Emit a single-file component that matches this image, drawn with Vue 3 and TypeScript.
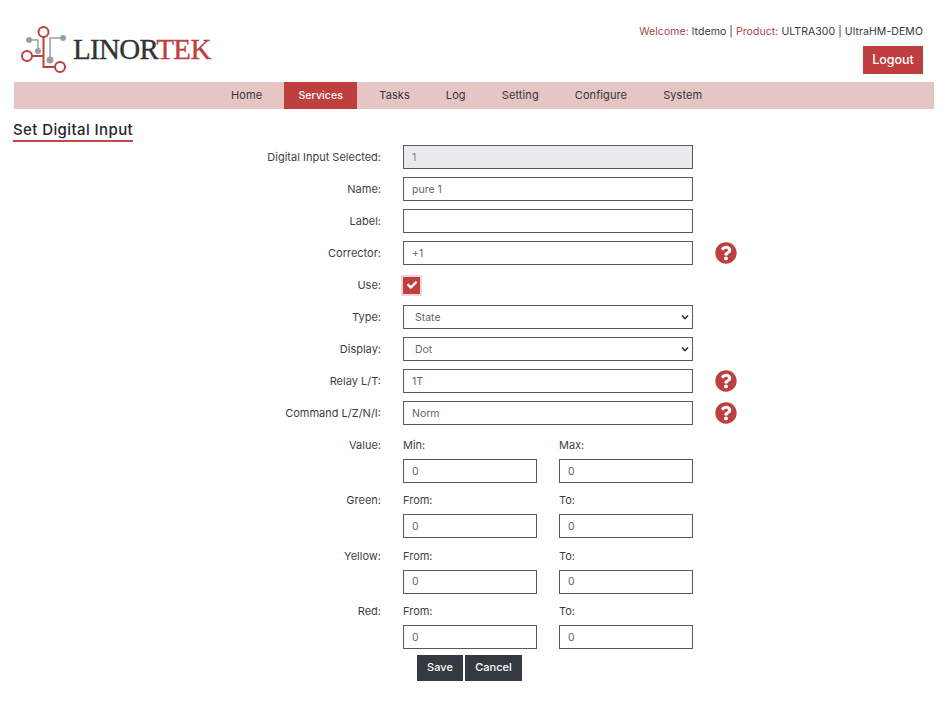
<script setup lang="ts">
interface Row { label: string; value: string; help?: boolean; disabled?: boolean }
const navItems: string[] = ['Home', 'Services', 'Tasks', 'Log', 'Setting', 'Configure', 'System']
const topRows: Row[] = [
  { label: 'Digital Input Selected:', value: '1', disabled: true },
  { label: 'Name:', value: 'pure 1' },
  { label: 'Label:', value: '' },
  { label: 'Corrector:', value: '+1', help: true },
]
const midRows: Row[] = [
  { label: 'Relay L/T:', value: '1T', help: true },
  { label: 'Command L/Z/N/I:', value: 'Norm', help: true },
]
const selects = [
  { label: 'Type:', value: 'State' },
  { label: 'Display:', value: 'Dot' },
]
const ranges = [
  { label: 'Value:', a: 'Min:', b: 'Max:' },
  { label: 'Green:', a: 'From:', b: 'To:' },
  { label: 'Yellow:', a: 'From:', b: 'To:' },
  { label: 'Red:', a: 'From:', b: 'To:' },
]
const helpPath = 'M504 256c0 136.997-111.043 248-248 248S8 392.997 8 256C8 119.083 119.043 8 256 8s248 111.083 248 248zM262.655 90c-54.497 0-89.255 22.957-116.549 63.758-3.536 5.286-2.353 12.415 2.715 16.258l34.699 26.31c5.205 3.947 12.621 3.008 16.665-2.122 17.864-22.658 30.113-35.797 57.303-35.797 20.429 0 45.698 13.148 45.698 32.958 0 14.976-12.363 22.667-32.534 33.976C247.128 238.528 216 254.941 216 296v4c0 6.627 5.373 12 12 12h56c6.627 0 12-5.373 12-12v-1.333c0-28.462 83.186-29.647 83.186-106.667 0-58.002-60.165-102-116.531-102zM256 338c-25.365 0-46 20.635-46 46 0 25.364 20.635 46 46 46s46-20.636 46-46c0-25.365-20.635-46-46-46z'
</script>

<template>
  <div class="page">
    <header class="header">
      <div class="brand">
        <svg class="logo" width="52" height="52" viewBox="20 22 52 52">
          <g fill="none" stroke="#9aa0a2" stroke-width="1.5">
            <path d="M29 40H38V51" />
            <path d="M50 60V38H63" />
          </g>
          <g fill="#9aa0a2">
            <circle cx="29" cy="40" r="3" />
            <circle cx="38" cy="51" r="3" />
            <circle cx="63" cy="38" r="3" />
            <circle cx="50" cy="60" r="3.5" />
          </g>
          <g fill="none" stroke="#bf3e3e" stroke-width="2">
            <path d="M43.5 37V67H55" />
            <path d="M32 56H43.5" />
            <circle cx="43.5" cy="32" r="5" />
            <circle cx="27" cy="56" r="5" />
            <circle cx="60" cy="67" r="5" />
          </g>
        </svg>
        <span class="wordmark">LINOR<span class="wordmark-accent">TEK</span></span>
      </div>
      <div class="account">
        <div class="welcome">
          <span class="accent">Welcome:</span> ltdemo | <span class="accent">Product:</span> ULTRA300 | UltraHM-DEMO
        </div>
        <button class="logout" type="button">Logout</button>
      </div>
    </header>

    <nav class="nav">
      <a v-for="item in navItems" :key="item" class="nav-item" :class="{ active: item === 'Services' }">{{ item }}</a>
    </nav>

    <h1 class="title">Set Digital Input</h1>

    <form class="form" @submit.prevent>
      <div v-for="row in topRows" :key="row.label" class="row">
        <label class="label">{{ row.label }}</label>
        <input class="field" type="text" :value="row.value" :disabled="row.disabled" />
        <svg v-if="row.help" class="help" viewBox="0 0 512 512" width="22" height="22"><path :d="helpPath" /></svg>
      </div>

      <div class="row">
        <label class="label">Use:</label>
        <span class="check">
          <svg viewBox="0 0 512 512" width="10" height="10"><path fill="#fff" stroke="#fff" stroke-width="30" d="M173.898 439.404l-166.4-166.4c-9.997-9.997-9.997-26.206 0-36.204l36.203-36.204c9.997-9.998 26.207-9.998 36.204 0L192 312.69 432.095 72.596c9.997-9.997 26.207-9.997 36.204 0l36.203 36.204c9.997 9.997 9.997 26.206 0 36.204l-294.4 294.401c-9.998 9.997-26.207 9.997-36.204-.001z" /></svg>
        </span>
      </div>

      <div v-for="sel in selects" :key="sel.label" class="row">
        <label class="label">{{ sel.label }}</label>
        <select class="field select">
          <option>{{ sel.value }}</option>
        </select>
      </div>

      <div v-for="row in midRows" :key="row.label" class="row">
        <label class="label">{{ row.label }}</label>
        <input class="field" type="text" :value="row.value" />
        <svg class="help" viewBox="0 0 512 512" width="22" height="22"><path :d="helpPath" /></svg>
      </div>

      <div v-for="range in ranges" :key="range.label" class="range">
        <label class="label">{{ range.label }}</label>
        <div class="pair">
          <span class="sub">{{ range.a }}</span>
          <span class="sub">{{ range.b }}</span>
          <input class="field" type="text" value="0" />
          <input class="field" type="text" value="0" />
        </div>
      </div>

      <div class="actions">
        <button class="btn save" type="button">Save</button>
        <button class="btn cancel" type="button">Cancel</button>
      </div>
    </form>
  </div>
</template>

<style>
html, body { margin: 0; background: #fff; }
</style>

<style scoped>
.page {
  width: 946px;
  height: 707px;
  overflow: hidden;
  font-family: "Inter", "Open Sans", sans-serif;
  font-size: 11px;
  color: #3b3f44;
}
.header {
  height: 82px;
  display: flex;
  justify-content: space-between;
  box-sizing: border-box;
  padding: 22px 23px 0 20px;
}
.brand {
  display: flex;
  align-items: flex-start;
  height: 52px;
}
.logo { display: block; flex: none; }
.wordmark {
  margin-left: 1px;
  font-family: "Liberation Serif", serif;
  font-size: 29px;
  line-height: 54px;
  letter-spacing: -0.7px;
  color: #333;
  -webkit-text-stroke: 0.35px currentColor;
}
.wordmark-accent { color: #bf3e3e; }
.account {
  display: flex;
  flex-direction: column;
  align-items: flex-end;
  padding-top: 3px;
}
.welcome {
  height: 21px;
  line-height: 13px;
  color: #33373c;
  font-size: 10.5px;
  letter-spacing: 0.07px;
}
.accent { color: #a8444a; }
.logout {
  width: 60px;
  height: 28px;
  border: 0;
  padding: 0 0 2px;
  background: #bf3e3e;
  color: #fff;
  font: 500 12.5px "Inter", sans-serif;
}
.nav {
  margin: 0 12px 0 14px;
  height: 27px;
  background: #e6c5c5;
  display: flex;
  align-items: stretch;
  padding-left: 199px;
}
.nav-item {
  padding: 0 18px;
  line-height: 27px;
  color: #33373c;
  font-size: 11px;
  letter-spacing: 0.1px;
}
.nav-item.active {
  box-sizing: border-box;
  width: 73px;
  margin: 0 4px;
  padding: 0;
  text-align: center;
  background: #bf3e3e;
  color: #fff;
  font-size: 10.5px;
  font-weight: 500;
}
.title {
  display: table;
  margin: 11px 0 2px 13px;
  border-bottom: 2px solid #c9444a;
  font-size: 15px;
  letter-spacing: 0.4px;
  line-height: 20px;
  font-weight: 500;
  color: #25282c;
}
.form {
  display: flex;
  flex-direction: column;
  gap: 8px;
}
.row {
  display: grid;
  grid-template-columns: 381px 290px 22px;
  column-gap: 22px;
  height: 24px;
  align-items: center;
}
.label {
  text-align: right;
  line-height: 26px;
  align-self: start;
}
.field {
  box-sizing: border-box;
  width: 100%;
  height: 24px;
  margin: 0;
  padding: 0 8px;
  border: 1px solid #55595c;
  border-radius: 0;
  background: #fff;
  color: #62676b;
  font: 10.5px "Inter", sans-serif;
}
.field:disabled {
  background: #e9ecef;
  color: #7a7f83;
}
.select {
  appearance: none;
  padding: 0 11px;
  background: #fff url("data:image/svg+xml,%3Csvg xmlns='http://www.w3.org/2000/svg' width='8' height='6' viewBox='0 0 8 6'%3E%3Cpath d='M1 1.5l3 3 3-3' fill='none' stroke='%23333' stroke-width='1.6'/%3E%3C/svg%3E") no-repeat right 3px center;
}
.help {
  fill: #bf3e3e;
  display: block;
}
.check {
  box-sizing: border-box;
  width: 17px;
  height: 17px;
  background: #bf3e3e;
  box-shadow: 0 0 0 2px #f2d4d4;
  display: flex;
  align-items: center;
  justify-content: center;
}
.range {
  display: grid;
  grid-template-columns: 381px 290px;
  column-gap: 22px;
  margin-bottom: -3.67px;
}
.pair {
  display: grid;
  grid-template-columns: 134px 134px;
  grid-template-rows: 24px 24px;
  column-gap: 22px;
  row-gap: 3px;
}
.sub {
  line-height: 26px;
}
.actions {
  display: flex;
  justify-content: flex-start;
  gap: 2px;
  margin: 1.67px 0 0 417px;
}
.btn {
  height: 26px;
  border: 0;
  padding: 0 0 2px;
  background: #343a40;
  color: #fff;
  font: 500 11px "Inter", sans-serif;
}
.save { width: 46px; }
.cancel { width: 57px; }
</style>
